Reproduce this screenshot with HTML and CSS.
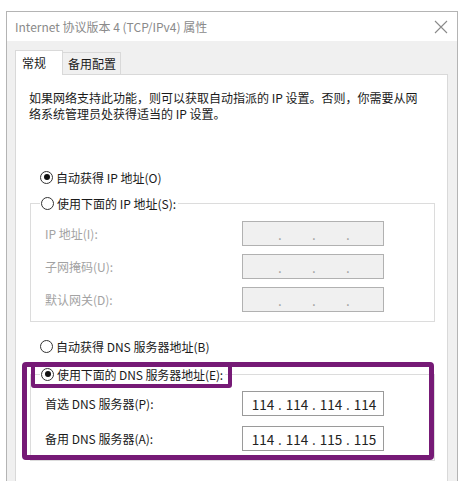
FILE: index.html
```html
<!DOCTYPE html>
<html lang="zh-CN">
<head>
  <meta charset="UTF-8">
  <title>Internet 协议版本 4 (TCP/IPv4) 属性</title>
  <link rel="stylesheet" href="styles.css">
</head>
<body>
  <div class="dialog">
    <div class="titlebar">
      <span class="title">Internet 协议版本 4 (TCP/IPv4) 属性</span>
      <svg class="close" width="14" height="14" viewBox="0 0 14 14">
        <path d="M1 1 L13 13 M13 1 L1 13" stroke="#8a8a8a" stroke-width="1.1" fill="none"/>
      </svg>
    </div>

    <div class="content">
      <div class="tabs">
        <div class="tab active">常规</div>
        <div class="tab">备用配置</div>
      </div>

      <div class="panel">
        <p class="desc">如果网络支持此功能，则可以获取自动指派的 IP 设置。否则，你需要从网络系统管理员处获得适当的 IP 设置。</p>

        <label class="radio-row first">
          <span class="radio checked"></span>自动获得 IP 地址(O)
        </label>

        <fieldset class="group">
          <legend><label class="radio-row"><span class="radio"></span>使用下面的 IP 地址(S):</label></legend>
          <div class="field-row disabled">
            <span class="field-label">IP 地址(I):</span>
            <div class="ip-box">
              <span class="octet"></span><span class="dot">.</span><span class="octet"></span><span class="dot">.</span><span class="octet"></span><span class="dot">.</span><span class="octet"></span>
            </div>
          </div>
          <div class="field-row disabled">
            <span class="field-label">子网掩码(U):</span>
            <div class="ip-box">
              <span class="octet"></span><span class="dot">.</span><span class="octet"></span><span class="dot">.</span><span class="octet"></span><span class="dot">.</span><span class="octet"></span>
            </div>
          </div>
          <div class="field-row disabled">
            <span class="field-label">默认网关(D):</span>
            <div class="ip-box">
              <span class="octet"></span><span class="dot">.</span><span class="octet"></span><span class="dot">.</span><span class="octet"></span><span class="dot">.</span><span class="octet"></span>
            </div>
          </div>
        </fieldset>

        <label class="radio-row dns-auto">
          <span class="radio"></span>自动获得 DNS 服务器地址(B)
        </label>

        <div class="dns-wrap">
          <fieldset class="group dns">
            <legend><label class="radio-row"><span class="radio checked"></span>使用下面的 DNS 服务器地址(E):</label></legend>
            <div class="field-row">
              <span class="field-label">首选 DNS 服务器(P):</span>
              <div class="ip-box">
                <span class="octet">114</span><span class="dot">.</span><span class="octet">114</span><span class="dot">.</span><span class="octet">114</span><span class="dot">.</span><span class="octet">114</span>
              </div>
            </div>
            <div class="field-row">
              <span class="field-label">备用 DNS 服务器(A):</span>
              <div class="ip-box">
                <span class="octet">114</span><span class="dot">.</span><span class="octet">114</span><span class="dot">.</span><span class="octet">115</span><span class="dot">.</span><span class="octet">115</span>
              </div>
            </div>
          </fieldset>
          <!-- marcas de resaltado -->
          <span class="mark-big"></span>
          <span class="mark-small"></span>
        </div>
      </div>
    </div>
  </div>
</body>
</html>
```

FILE: styles.css
```css
body {
  margin: 0;
  width: 463px;
  height: 481px;
  overflow: hidden;
  background: #fff;
  font-family: "Noto Sans CJK SC", "Noto Sans", sans-serif;
  font-size: 12px;
  color: #1a1a1a;
}

.dialog {
  margin: 11px 0 0 6px;
  width: 450px;
  height: 469px;
  overflow: hidden;
  border: 1px solid #b4b4b4;
  border-bottom: none;
  background: #f0f0f0;
}

.titlebar {
  height: 29px;
  background: #fff;
  display: flex;
  align-items: center;
  justify-content: space-between;
  padding: 0 9px 0 8px;
}

.title {
  color: #8a8a8a;
  font-size: 12px;
}

.content {
  padding: 9px 0 0 8px;
}

/* pestañas */
.tabs {
  display: flex;
  align-items: flex-end;
  height: 24px;
}

.tab {
  height: 21px;
  line-height: 21px;
  padding: 0 4px 0 5px;
  border: 1px solid #d9d9d9;
  border-bottom: none;
  border-left: none;
  background: #f0f0f0;
  font-size: 12px;
}

.tab.active {
  width: 40px;
  height: 24px;
  line-height: 24px;
  padding: 0 0 0 6px;
  border-left: 1px solid #d9d9d9;
  background: #fff;
  position: relative;
  z-index: 1;
  margin-bottom: -1px;
}

.panel {
  width: 418px;
  height: 400px;
  background: #fff;
  border: 1px solid #d9d9d9;
  padding: 15px 0 0 13px;
}

.desc {
  margin: 0;
  width: 392px;
  line-height: 16px;
}

/* botones de radio */
.radio-row {
  display: flex;
  align-items: center;
  height: 20px;
  padding-left: 11px;
  color: #1a1a1a;
}

.radio-row.first {
  margin-top: 45px;
  margin-bottom: 6px;
}

.radio {
  width: 11px;
  height: 11px;
  border: 1px solid #333;
  border-radius: 50%;
  margin-right: 3px;
  display: flex;
  align-items: center;
  justify-content: center;
  flex: none;
}

.radio.checked::after {
  content: "";
  width: 6px;
  height: 6px;
  border-radius: 50%;
  background: #111;
}

/* grupos */
.group {
  margin: 0 0 0 1px;
  width: 403px;
  border: 1px solid #dcdcdc;
  padding: 8px 0 9px 0;
  display: flex;
  flex-direction: column;
  gap: 8px;
}

.group legend {
  padding: 0 2px 0 1px;
  margin-left: 9px;
}

.group legend .radio-row {
  padding-left: 0;
}

.field-row {
  display: flex;
  align-items: center;
  height: 25px;
  padding-left: 14px;
}

.field-label {
  width: 197px;
}

.field-row.disabled .field-label {
  color: #a3a3a3;
}

.ip-box {
  width: 134px;
  height: 23px;
  border: 1px solid #9a9a9a;
  background: #fff;
  display: flex;
  align-items: center;
  padding-left: 6px;
  font-size: 13.5px;
  color: #222;
}

.field-row.disabled .ip-box {
  background: #f0f0f0;
  border-color: #b1b1b1;
  color: #9a9a9a;
}

.octet {
  width: 28px;
  text-align: center;
}

.dot {
  width: 6px;
  text-align: center;
}

.radio-row.dns-auto {
  margin-top: 14px;
}

/* sección DNS con marcas */
.dns-wrap {
  position: relative;
  margin-top: 8px;
}

.group.dns {
  padding-top: 7px;
  gap: 10px;
  padding-bottom: 9px;
}

.dns legend .radio-row {
  letter-spacing: -0.1px;
}

.mark-big {
  position: absolute;
  left: -7px;
  top: -2px;
  width: 402px;
  height: 88px;
  border: 5px solid #761a76;
  border-radius: 4px;
}

.mark-small {
  position: absolute;
  left: 2px;
  top: -2px;
  width: 193px;
  height: 17px;
  border: 4px solid #761a76;
  border-top-width: 5px;
  border-radius: 0 0 3px 3px;
}
```
